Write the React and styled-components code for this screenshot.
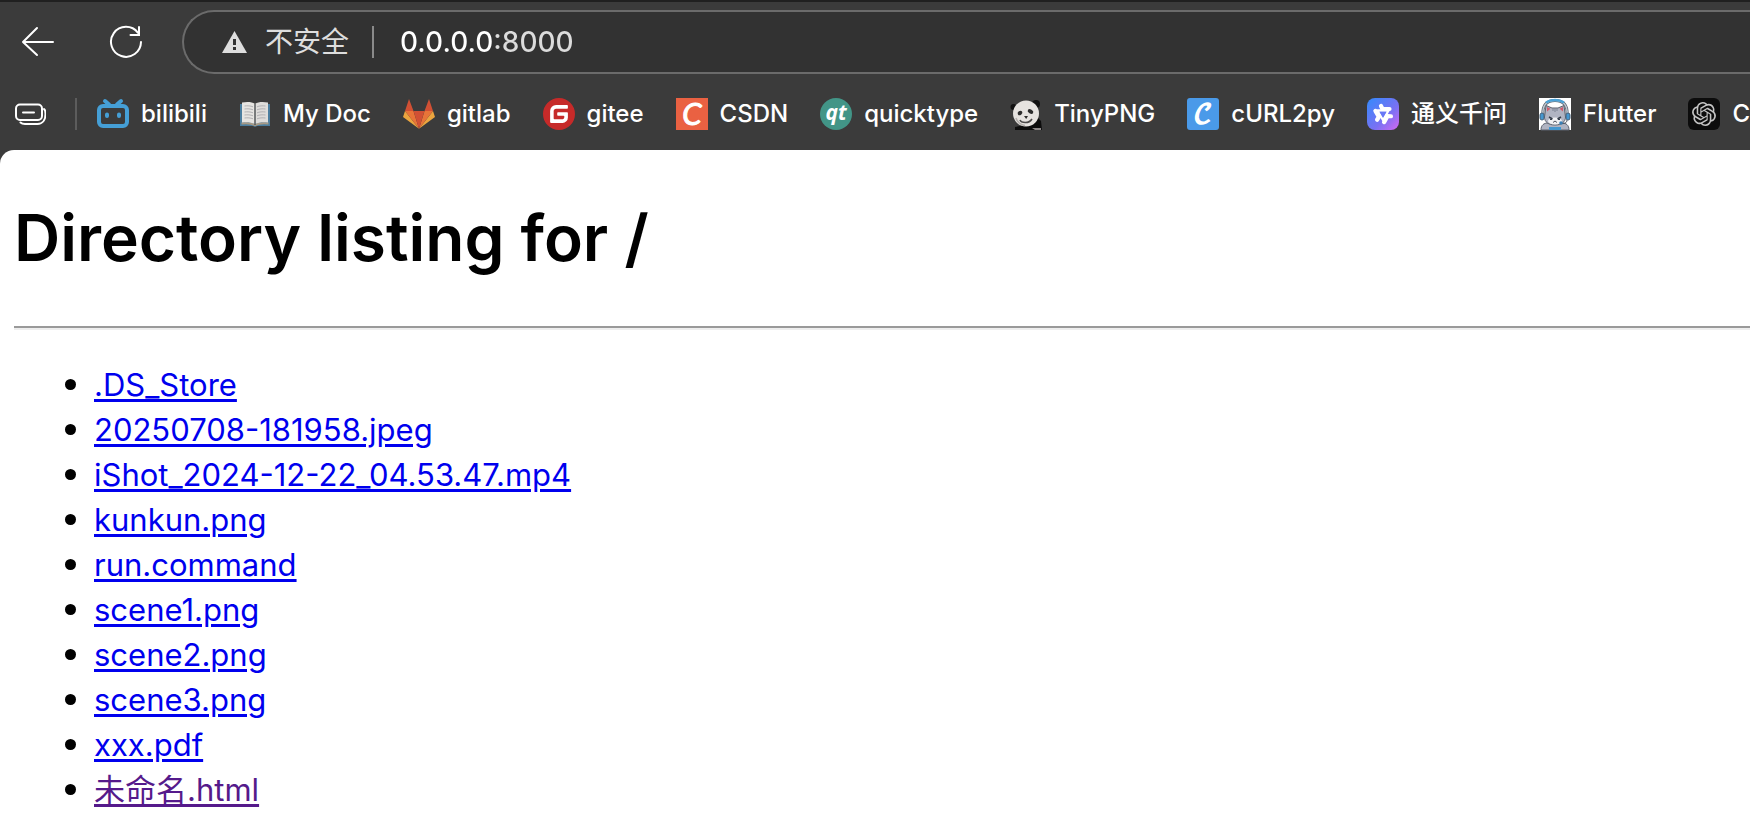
import React from 'react';
import styled, { createGlobalStyle } from 'styled-components';
import { SiGitee, SiOpenai } from 'react-icons/si';

const GlobalStyle = createGlobalStyle`
  * {
    box-sizing: border-box;
  }

  body {
    margin: 0;
    background: #3b3b3b;
    font-family: Inter, 'Noto Sans CJK SC', sans-serif;
  }
`;

const Window = styled.div`
  min-height: 100vh;
  display: flex;
  flex-direction: column;
  overflow: hidden;
  border-top: 2px solid #202020;
`;

const Toolbar = styled.header`
  display: flex;
  align-items: center;
  padding: 8px 0 8px 16px;
`;

const ToolButton = styled.button`
  display: flex;
  flex: none;
  align-items: center;
  justify-content: center;
  width: 44px;
  height: 44px;
  margin-right: 44px;
  padding: 0;
  border: none;
  background: none;
  color: #ffffff;
`;

const AddressBar = styled.div`
  flex: 1;
  display: flex;
  align-items: center;
  height: 64px;
  margin-left: -10px;
  padding-left: 38px;
  border: 2px solid #6b6b6b;
  border-right: none;
  border-radius: 32px 0 0 32px;
  background: #323232;
`;

const SecurityButton = styled.button`
  display: flex;
  align-items: center;
  gap: 18px;
  padding: 0;
  border: none;
  background: none;
  color: #dedede;
  font-family: inherit;
  font-size: 28px;
  line-height: 40px;
`;

const Divider = styled.span`
  flex: none;
  width: 2px;
  height: 32px;
  margin: 0 ${props => props.$after} 0 ${props => props.$before};
  background: ${props => props.$color};
`;

// The host is brighter than the port that follows it
const AddressInput = styled.input`
  flex: 1;
  min-width: 0;
  padding: 0;
  border: none;
  outline: none;
  background: linear-gradient(to right, #ffffff 95px, #dcdcdc 95px);
  background-clip: text;
  color: transparent;
  font-family: inherit;
  font-size: 28px;
  font-weight: 500;
  line-height: 40px;
`;

const BookmarksBar = styled.nav`
  display: flex;
  align-items: center;
  height: 68px;
  padding: 0 0 4px 14px;
  white-space: nowrap;
`;

const CollectionsButton = styled(ToolButton)`
  width: 32px;
  height: 32px;
  margin: 0;
`;

const BookmarkList = styled.ul`
  display: flex;
  gap: 32px;
  margin: 0;
  padding: 0;
  list-style: none;
`;

const Bookmark = styled.a`
  display: flex;
  align-items: center;
  gap: 12px;
  color: #ffffff;
  font-size: 24px;
  font-weight: 500;
  line-height: 32px;
  text-decoration: none;

  svg {
    flex: none;
    overflow: visible;
  }
`;

const Page = styled.main`
  flex: 1;
  padding: 42px 0 16px 14px;
  border-radius: 14px 0 0 0;
  background: #ffffff;
  color: #000000;
`;

const Title = styled.h1`
  margin: 0 0 42px;
  font-size: 64px;
  font-weight: 600;
  line-height: 92px;
`;

const Rule = styled.hr`
  margin: 0 0 32px;
  border: none;
  border-top: 2px solid #9a9a9a;
  border-bottom: 2px solid #eeeeee;
`;

const FileList = styled.ul`
  margin: 0;
  padding: 0 0 0 51px;
  list-style: none;
`;

const FileItem = styled.li`
  display: flex;
  align-items: center;
  gap: 18px;

  &::before {
    content: '';
    width: 11px;
    height: 11px;
    border-radius: 50%;
    background: #000000;
  }
`;

const FileLink = styled.a`
  color: ${props => (props.$visited ? '#551a8b' : '#0000ee')};
  font-size: 31px;
  line-height: 45px;
  text-decoration: underline;
  text-decoration-thickness: 3px;
  text-underline-offset: 3px;
`;

const BackIcon = () => (
  <svg width="34" height="32" viewBox="0 0 34 32" fill="none" stroke="currentColor" strokeWidth="2" strokeLinecap="round" strokeLinejoin="round">
    <path d="M32 16H2M16 2 2 16l14 13" />
  </svg>
);

const ReloadIcon = () => (
  <svg width="34" height="34" viewBox="0 0 34 34" fill="none" stroke="currentColor" strokeWidth="2" strokeLinecap="round">
    <path d="M32 17a15 15 0 1 1-3-9.2" />
    <path d="M30 2v8h-8.5" strokeLinejoin="miter" />
  </svg>
);

const WarningIcon = () => (
  <svg width="25" height="22" viewBox="0 0 25 22">
    <path d="M12.5 0 25 22H0Z" fill="#dedede" />
    <path d="M11 8h3v6h-3zM11 16h3v3h-3z" fill="#323232" />
  </svg>
);

const CollectionsIcon = () => (
  <svg width="32" height="22" viewBox="0 0 32 22" fill="none" stroke="currentColor" strokeWidth="2" strokeLinecap="round">
    <rect x="2" y="1.5" width="26" height="15.5" rx="4" />
    <path d="M9 9.500h11M30 6c1.300 1 1.500 3 1.500 5 0 6-3 10-8 10H11c-2 0-3.500-.5-4.500-1.500" />
  </svg>
);

const BilibiliIcon = () => (
  <svg width="32" height="32" viewBox="0 0 32 32" fill="none" stroke="#459fd6" strokeWidth="4" strokeLinecap="round">
    <path d="m8 3 4 3.500M24 3l-4 3.500" />
    <rect x="2" y="8" width="28" height="20" rx="4" />
    <path d="M10 16.500v1.500M22 16.500v1.500" />
  </svg>
);

const BookIcon = () => (
  <svg width="32" height="32" viewBox="-1 0 32 32">
    <path d="M0 6h30v22H17l-2 1-2-1H0Z" fill="#4b7d9e" />
    <path d="M1.500 25.500C6 25 11 25 15 27c4-2 9-2 13.500-1.500" fill="none" stroke="#a89a86" strokeWidth="2" />
    <path d="M2 4.500c5-.8 10-.8 13 1.500v20c-4-2-9-2-13-1.500Z" fill="#e6e4e1" />
    <path d="M28 4.500c-5-.8-10-.8-13 1.500v20c4-2 9-2 13-1.500Z" fill="#dedcda" />
    <path d="M4.500 8c3-.4 6-.2 8.500.8M4.500 11c3-.4 6-.2 8.500.8M4.500 14c3-.4 6-.2 8.500.8M4.500 17c3-.4 6-.2 8.500.8M4.500 20c3-.4 6-.2 8.500.8M25.500 8c-3-.4-6-.2-8.500.8M25.500 11c-3-.4-6-.2-8.500.8M25.500 14c-3-.4-6-.2-8.500.8M25.500 17c-3-.4-6-.2-8.500.8M25.500 20c-3-.4-6-.2-8.500.8" fill="none" stroke="#b1b0b3" />
    <path d="M15 6v21" stroke="#55585a" strokeWidth="1.5" />
  </svg>
);

const GitlabIcon = () => (
  <svg width="32" height="32" viewBox="0 0 32 32">
    <path d="M6 1 2 13h8.500ZM26 1l4 12h-8.500Z" fill="#d15034" />
    <path d="M2 13 0 19l16 11.700ZM30 13l2 6-16 11.700Z" fill="#eba53f" />
    <path d="M2 13h8.500L16 30.700ZM30 13h-8.500L16 30.700Z" fill="#e87438" />
    <path d="M10.500 13h11L16 30.700Z" fill="#d15034" />
  </svg>
);

const GiteeIcon = () => (
  <svg width="32" height="32" viewBox="0 0 32 32">
    <circle cx="16" cy="16" r="15" fill="#ffffff" />
    <SiGitee size={32} color="#c62a29" />
  </svg>
);

const CsdnIcon = () => (
  <svg width="32" height="32" viewBox="0 0 32 32">
    <rect width="32" height="32" fill="#ea6142" />
    <text x="16" y="27" textAnchor="middle" fill="#ffffff" stroke="#ffffff" strokeWidth="1" fontFamily="Lato" fontSize="31" fontStyle="italic" fontWeight="400">C</text>
  </svg>
);

const QuicktypeIcon = () => (
  <svg width="32" height="32" viewBox="0 0 32 32">
    <circle cx="16" cy="16" r="16" fill="#429587" />
    <text x="16" y="22" textAnchor="middle" fill="#ffffff" fontFamily="Open Sans" fontSize="21" fontStyle="italic" fontWeight="700">qt</text>
  </svg>
);

const TinyPngIcon = () => (
  <svg width="32" height="32" viewBox="0 0 32 32">
    <path d="M5 32v-3l10-2 12-8 4 4 1 9Z" fill="#0c0c0c" />
    <path d="M22 30h9v2h-6Z" fill="#8d8888" />
    <circle cx="3.500" cy="9" r="3" fill="#111111" />
    <circle cx="26" cy="6" r="4" fill="#111111" />
    <ellipse cx="16" cy="15.500" rx="13" ry="13" fill="#e6e3e0" />
    <ellipse cx="10" cy="15" rx="2.500" ry="2" fill="#2c2c2c" transform="rotate(-35 10 15)" />
    <ellipse cx="20.500" cy="13.500" rx="3" ry="2" fill="#2c2c2c" transform="rotate(30 20.500 13.500)" />
    <path d="M14 18h4l-1.800 3Z" fill="#2c2c2c" />
    <path d="M10 22c1 3 9 4 12-1" fill="none" stroke="#4a4848" strokeWidth="1.5" />
    <path d="M6 20c1 4 5 7 9 7.500" fill="none" stroke="#b4b0ad" strokeWidth="1.5" />
  </svg>
);

const CurlIcon = () => (
  <svg width="32" height="32" viewBox="0 0 32 32">
    <rect width="32" height="32" rx="3" fill="#4a9ae9" />
    <text x="16" y="25" textAnchor="middle" fill="#ffffff" stroke="#ffffff" strokeWidth="1.5" fontFamily="DejaVu Math TeX Gyre, DejaVu Serif" fontSize="26">𝒞</text>
  </svg>
);

const TongyiIcon = () => (
  <svg width="32" height="32" viewBox="0 0 32 32">
    <defs>
      <linearGradient id="tongyi" x1="0" y1="0" x2="1" y2="1">
        <stop offset="0.1" stopColor="#3f86fa" />
        <stop offset="0.6" stopColor="#7a71f3" />
        <stop offset="1" stopColor="#d468f2" />
      </linearGradient>
    </defs>
    <rect width="32" height="32" rx="8" fill="url(#tongyi)" />
    <g fill="none" stroke="#ffffff" strokeWidth="4.2" strokeLinecap="round" strokeLinejoin="round">
      <path d="M14 8l1.500 3H22.500" />
      <path d="M14 8l1.500 3H22.500" transform="rotate(120 16 16)" />
      <path d="M14 8l1.500 3H22.500" transform="rotate(240 16 16)" />
      <path d="M10.500 12.500h11L16 22Z" strokeWidth="2.4" />
    </g>
    <path d="M12.500 13.700h7L16 19.800Z" fill="#6878f6" />
  </svg>
);

const CatIcon = () => (
  <svg width="32" height="32" viewBox="0 0 32 32">
    <rect width="32" height="32" fill="#ffffff" />
    <path d="M2 32c0-5 3-7 7-7h14c4 0 7 2 7 7Z" fill="#b0b4c2" stroke="#5c626e" />
    <path d="M10 29h12v3H10Z" fill="#4497cf" />
    <path d="M4 17C3 7 8 2.500 16 2.500S29 7 28 17" fill="none" stroke="#59636f" strokeWidth="3" />
    <path d="M4 17C3 7 8 2.500 16 2.500S29 7 28 17" fill="none" stroke="#bfc8d0" strokeWidth="1.5" />
    <path d="M7 4.500c5-3.500 13-3.500 18 0" fill="none" stroke="#4ba3d8" strokeWidth="2.5" />
    <path d="M5.500 19 7 7.500l6 2.500h6l6-2.500L26.500 19c0 5-4 8-10.500 8S5.500 24 5.500 19Z" fill="#b0b4c2" stroke="#5c626e" />
    <path d="m8 9 3.500 1.800L8 13.500ZM24 9l-3.500 1.800 3.500 2.700Z" fill="#d25a6b" />
    <path d="M14 10v3M16 10v4M18 10v3" stroke="#7b8191" />
    <ellipse cx="16" cy="23" rx="7" ry="3.500" fill="#f0f1f4" />
    <path d="m10 19 3.500 2M22 19l-3.500 2" stroke="#343c49" strokeWidth="1.5" />
    <path d="M11 21h2v1h-2zM19 21h2v1h-2z" fill="#343c49" />
    <path d="M14 24.500l2-1.500 2 1.500" fill="none" stroke="#4d5360" />
    <rect x="1" y="15" width="4" height="7" rx="2" fill="#4497cf" stroke="#44607a" />
    <rect x="27" y="15" width="4" height="7" rx="2" fill="#4497cf" stroke="#44607a" />
    <path d="M28 22c0 3-3 4-6 3.500" fill="none" stroke="#4d5360" />
    <circle cx="22" cy="25" r="1.8" fill="#397fb5" />
  </svg>
);

const OpenAiIcon = () => (
  <svg width="32" height="32" viewBox="0 0 32 32">
    <rect width="32" height="32" rx="6" fill="#0c0c0c" />
    <SiOpenai x="4" y="4" size={24} color="#c4c4c4" />
  </svg>
);

const bookmarks = [
  { name: 'bilibili', Icon: BilibiliIcon },
  { name: 'My Doc', Icon: BookIcon },
  { name: 'gitlab', Icon: GitlabIcon },
  { name: 'gitee', Icon: GiteeIcon },
  { name: 'CSDN', Icon: CsdnIcon },
  { name: 'quicktype', Icon: QuicktypeIcon },
  { name: 'TinyPNG', Icon: TinyPngIcon },
  { name: 'cURL2py', Icon: CurlIcon },
  { name: '通义千问', Icon: TongyiIcon },
  { name: 'Flutter', Icon: CatIcon },
  { name: 'Ch', Icon: OpenAiIcon },
];

const files = [
  { name: '.DS_Store' },
  { name: '20250708-181958.jpeg' },
  { name: 'iShot_2024-12-22_04.53.47.mp4' },
  { name: 'kunkun.png' },
  { name: 'run.command' },
  { name: 'scene1.png' },
  { name: 'scene2.png' },
  { name: 'scene3.png' },
  { name: 'xxx.pdf' },
  { name: '未命名.html', visited: true },
];

const App = () => (
  <Window>
    <GlobalStyle />
    <Toolbar>
      <ToolButton type="button" aria-label="Back">
        <BackIcon />
      </ToolButton>
      <ToolButton type="button" aria-label="Reload">
        <ReloadIcon />
      </ToolButton>
      <AddressBar>
        <SecurityButton type="button">
          <WarningIcon />
          不安全
        </SecurityButton>
        <Divider $before="23px" $after="26px" $color="#8a8a8a" />
        <AddressInput type="text" aria-label="Address" defaultValue="0.0.0.0:8000" spellCheck={false} />
      </AddressBar>
    </Toolbar>

    <BookmarksBar>
      <CollectionsButton type="button" aria-label="Collections">
        <CollectionsIcon />
      </CollectionsButton>
      <Divider $before="29px" $after="20px" $color="#5c5c5c" />
      <BookmarkList>
        {bookmarks.map(({ name, Icon }) => (
          <li key={name}>
            <Bookmark href="#">
              <Icon />
              {name}
            </Bookmark>
          </li>
        ))}
      </BookmarkList>
    </BookmarksBar>

    <Page>
      <Title>Directory listing for /</Title>
      <Rule />
      <FileList>
        {files.map(file => (
          <FileItem key={file.name}>
            <FileLink href={file.name} $visited={file.visited}>
              {file.name}
            </FileLink>
          </FileItem>
        ))}
      </FileList>
    </Page>
  </Window>
);

export default App;
